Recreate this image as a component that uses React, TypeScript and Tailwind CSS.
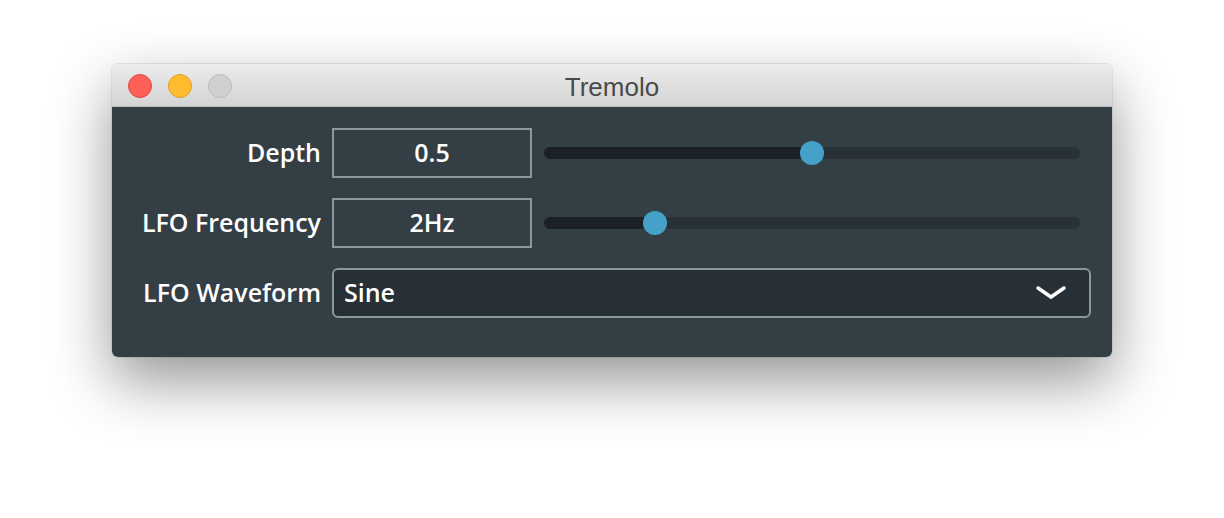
import { useState } from "react";

const LABEL_FONT = { fontFamily: '"Open Sans", "DejaVu Sans", sans-serif' };

function Slider({ value }: { value: number }) {
  const pct = `${value * 100}%`;
  return (
    <div className="relative ml-3 mr-[11px] h-3 flex-1 rounded-full bg-[#283138]">
      <div className="h-3 rounded-full bg-[#1b2125]" style={{ width: pct }} />
      <div
        className="absolute top-1/2 h-6 w-6 -translate-x-1/2 -translate-y-1/2 rounded-full bg-[#46a1c9]"
        style={{ left: pct }}
      />
    </div>
  );
}

function Row({ label, children }: { label: string; children: React.ReactNode }) {
  return (
    <div className="flex h-[50px] items-center">
      <div className="w-[220px] shrink-0 pr-[11px] text-right text-[25px] font-semibold text-white">{label}</div>
      {children}
    </div>
  );
}

export default function App() {
  const [depth] = useState(0.5);
  const [freq] = useState(0.207);

  return (
    <div className="h-[518px] w-[1224px] bg-white pt-16 pl-[112px]" style={LABEL_FONT}>
      <div className="w-[1000px] overflow-hidden rounded-[6px] shadow-[0_0_0_1px_rgba(0,0,0,0.08),0_24px_60px_rgba(0,0,0,0.42)]">
        <div className="relative flex h-[43px] items-center border-b border-[#b9b9b9] bg-gradient-to-b from-[#ececec] to-[#d4d4d4]">
          <div className="flex gap-4 pl-4 pt-[2px]">
            <span className="h-6 w-6 rounded-full border border-[#e0443e] bg-[#fe5f57]" />
            <span className="h-6 w-6 rounded-full border border-[#dea123] bg-[#febc2e]" />
            <span className="h-6 w-6 rounded-full border border-[#bcbcbc] bg-[#d0d0d0]" />
          </div>
          <div
            className="absolute inset-0 flex items-center justify-center pt-[4px] text-[26px] text-[#4a4a4a]"
            style={{ fontFamily: '"Liberation Sans", Arial, sans-serif' }}
          >
            Tremolo
          </div>
        </div>
        <div className="flex h-[250px] flex-col gap-5 bg-[#343e45] pt-[21px] pr-[21px]">
          <Row label="Depth">
            <div className="flex h-[50px] w-[200px] items-center justify-center border-2 border-[#8c979b] text-[25px] font-semibold text-white">
              0.5
            </div>
            <Slider value={depth} />
          </Row>
          <Row label="LFO Frequency">
            <div className="flex h-[50px] w-[200px] items-center justify-center border-2 border-[#8c979b] text-[25px] font-semibold text-white">
              2Hz
            </div>
            <Slider value={freq} />
          </Row>
          <Row label="LFO Waveform">
            <div className="flex h-[50px] flex-1 items-center justify-between rounded-[6px] border-2 border-[#8c979b] bg-[#283037] pl-[10px] pr-[22px] text-[25px] font-semibold text-white">
              <span>Sine</span>
              <svg width="32" height="16" viewBox="0 0 32 16" fill="none">
                <path d="M3 3 L16 12 L29 3" stroke="white" strokeWidth="3.5" strokeLinecap="round" strokeLinejoin="miter" />
              </svg>
            </div>
          </Row>
        </div>
      </div>
    </div>
  );
}
